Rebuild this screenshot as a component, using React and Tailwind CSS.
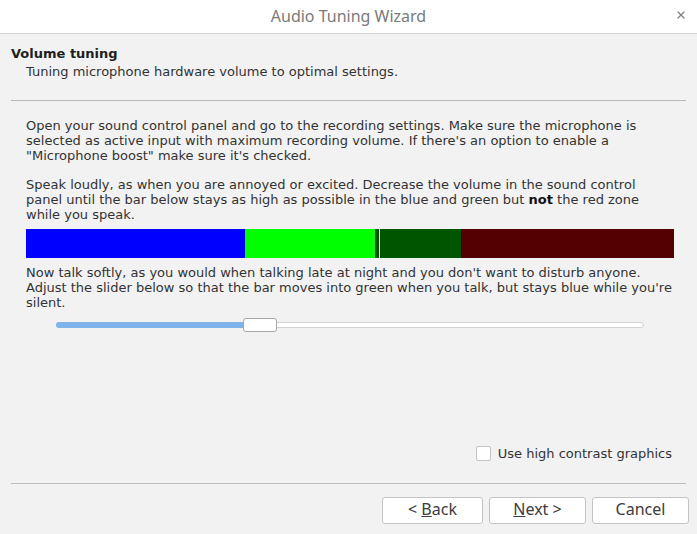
import { X } from 'lucide-react';

const body = { fontFamily: '"DejaVu Sans", sans-serif' };

function Button({ children, wide }) {
  return (
    <button
      type="button"
      className={`h-[27px] ${wide ? 'w-[101px]' : 'w-[97px]'} rounded-[3px] border border-[#c4c4c4] bg-white pb-[3px] text-[16px] leading-[20px] text-[#3c3c3c] font-['Noto_Sans',sans-serif]`}
    >
      {children}
    </button>
  );
}

export default function App() {
  return (
    <div className="flex h-[534px] w-[697px] flex-col overflow-hidden bg-[#f2f2f2]">
      <div className="relative flex h-[34px] shrink-0 items-center justify-center border-b border-[#d4d4d4] bg-white pb-[2px]">
        <span className="text-[16px] text-[#7a7a7a] font-['Noto_Sans',sans-serif]">Audio Tuning Wizard</span>
        <X className="absolute right-[10px] top-[9px] h-[12px] w-[12px] text-[#808080]" strokeWidth={2.5} />
      </div>

      <div className="px-[11px] pt-[11px] text-[13px] leading-[18px] text-[#1e1e1e]" style={body}>
        <div className="font-bold">Volume tuning</div>
        <div className="pl-[15px] text-[#323232]">Tuning microphone hardware volume to optimal settings.</div>
        <div className="mt-[19px] h-px bg-[#b8b8b8]" />
      </div>

      <div className="flex flex-1 flex-col px-[26px] pt-[17px] text-[13px] leading-[15px] text-[#323232]" style={body}>
        <p>
          Open your sound control panel and go to the recording settings. Make sure the microphone is selected as
          active input with maximum recording volume. If there's an option to enable a "Microphone boost" make sure
          it's checked.
        </p>
        <p className="mt-[14px]">
          Speak loudly, as when you are annoyed or excited. Decrease the volume in the sound control panel until the
          bar below stays as high as possible in the blue and green but <b className="text-[#111]">not</b> the red
          zone while you speak.
        </p>

        <div className="mt-[7px] flex h-[29px] w-[648px] shrink-0">
          <div className="w-[219px] bg-[#0000ff]" />
          <div className="w-[130px] bg-[#00ff00]" />
          <div className="w-[4px] bg-[#004d00]" />
          <div className="w-px bg-[#d6f5d6]" />
          <div className="w-[81px] bg-[#005500]" />
          <div className="flex-1 bg-[#550000]" />
        </div>

        <p className="mt-[7px] mr-[-4px]">
          Now talk softly, as you would when talking late at night and you don't want to disturb anyone. Adjust the
          slider below so that the bar moves into green when you talk, but stays blue while you're silent.
        </p>

        <div className="relative ml-[30px] mt-[8px] h-[14px] w-[588px] shrink-0">
          <div className="absolute left-0 right-0 top-[4px] h-[6px] rounded-full border border-[#d2d2d2] bg-white" />
          <div className="absolute left-0 top-[4px] h-[6px] w-[190px] rounded-full bg-[#7eb4ea]" />
          <div className="absolute left-[187px] top-0 h-[14px] w-[34px] rounded-[3px] border border-[#a8a8a8] bg-white" />
        </div>

        <div className="flex-1" />

        <label className="mb-[22px] mr-[-1px] flex items-center justify-end gap-[7px]">
          <span className="h-[15px] w-[15px] rounded-[2px] border border-[#c4c4c4] bg-white" />
          <span className="text-[13px]">Use high contrast graphics</span>
        </label>
      </div>

      <div className="mx-[11px] h-px bg-[#bdbdbd]" />

      <div className="flex justify-end gap-[6px] pb-[10px] pr-[8px] pt-[13px]">
        <Button wide>
          &lt; <u>B</u>ack
        </Button>
        <Button>
          <u>N</u>ext &gt;
        </Button>
        <Button>Cancel</Button>
      </div>
    </div>
  );
}
